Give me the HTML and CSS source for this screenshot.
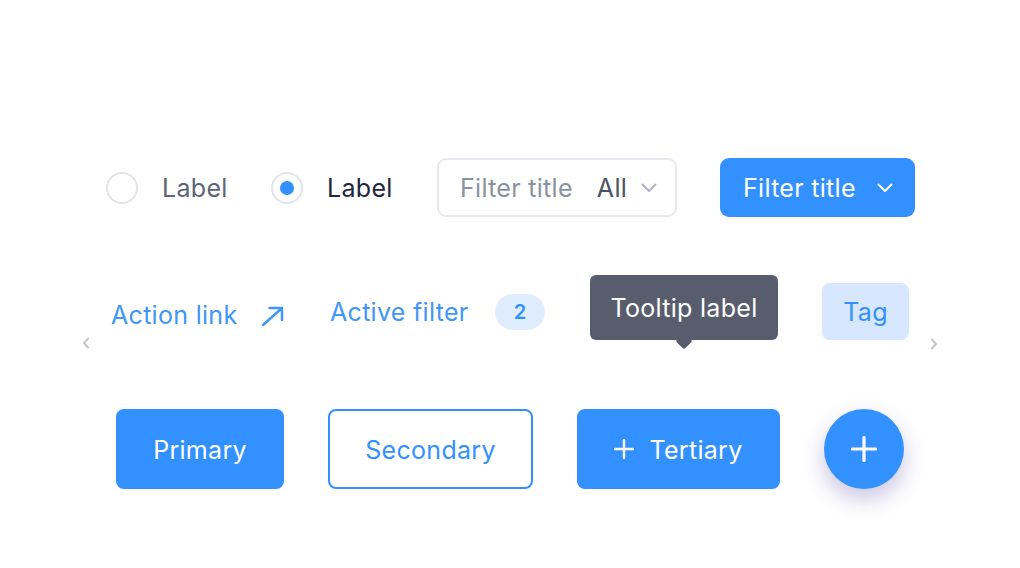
FILE: index.html
```html
<!DOCTYPE html>
<html lang="en">
<head>
<meta charset="utf-8">
<title>Components</title>
<link rel="stylesheet" href="styles.css">
</head>
<body>
<main class="board">
  <section class="row row-controls">
    <label class="radio">
      <span class="radio-ring"></span>
      <span class="radio-label">Label</span>
    </label>
    <label class="radio radio-checked">
      <span class="radio-ring"><span class="radio-dot"></span></span>
      <span class="radio-label">Label</span>
    </label>
    <button class="filter filter-outline">
      <span class="filter-title">Filter title</span>
      <span class="filter-value">All</span>
      <svg class="chev" width="16" height="10" viewBox="0 0 16 10"><path d="M1.5 1.5 L8 8 L14.5 1.5" fill="none" stroke="currentColor" stroke-width="2" stroke-linecap="round" stroke-linejoin="round"/></svg>
    </button>
    <button class="filter filter-solid">
      <span class="filter-title">Filter title</span>
      <svg class="chev" width="16" height="10" viewBox="0 0 16 10"><path d="M1.5 1.5 L8 8 L14.5 1.5" fill="none" stroke="currentColor" stroke-width="2" stroke-linecap="round" stroke-linejoin="round"/></svg>
    </button>
  </section>

  <section class="row row-misc">
    <svg class="nav nav-prev" width="8" height="12" viewBox="0 0 8 12"><path d="M6 1.5 L2 6 L6 10.5" fill="none" stroke="currentColor" stroke-width="2" stroke-linecap="round" stroke-linejoin="round"/></svg>
    <a class="action-link" href="#">
      <span>Action link</span>
      <svg width="24" height="24" viewBox="0 0 24 24"><path d="M3 21 L22 4 M9.5 4 H22 V16" fill="none" stroke="currentColor" stroke-width="2.5" stroke-linecap="round" stroke-linejoin="round"/></svg>
    </a>
    <div class="active-filter">
      <span>Active filter</span>
      <span class="badge">2</span>
    </div>
    <div class="tooltip">Tooltip label</div>
    <span class="tag">Tag</span>
    <svg class="nav nav-next" width="8" height="12" viewBox="0 0 8 12"><path d="M2 1.5 L6 6 L2 10.5" fill="none" stroke="currentColor" stroke-width="2" stroke-linecap="round" stroke-linejoin="round"/></svg>
  </section>

  <section class="row row-buttons">
    <button class="btn btn-primary">Primary</button>
    <button class="btn btn-secondary">Secondary</button>
    <button class="btn btn-tertiary">
      <svg width="20" height="20" viewBox="0 0 20 20"><path d="M10 1 V19 M1 10 H19" fill="none" stroke="currentColor" stroke-width="2.4" stroke-linecap="round"/></svg>
      <span>Tertiary</span>
    </button>
    <button class="fab" aria-label="Add">
      <svg width="26" height="26" viewBox="0 0 26 26"><path d="M13 1.5 V24.5 M1.5 13 H24.5" fill="none" stroke="currentColor" stroke-width="3.2" stroke-linecap="round"/></svg>
    </button>
  </section>
</main>
</body>
</html>
```

FILE: styles.css
```css
* { box-sizing: border-box; }

html, body {
  margin: 0;
  padding: 0;
  background: #ffffff;
}

body {
  font-family: "Inter", "Noto Sans", "Liberation Sans", sans-serif;
  font-size: 25px;
  font-weight: 400;
  letter-spacing: 0.3px;
  line-height: 30px;
  color: #1e2640;
  width: 1020px;
  height: 568px;
  overflow: hidden;
}

button {
  font: inherit;
  letter-spacing: inherit;
  border: none;
  background: none;
  padding: 0;
  margin: 0;
  cursor: pointer;
}

.board {
  padding-top: 158px;
}

.row {
  display: flex;
}

/* Row 1 */
.row-controls {
  height: 59px;
  align-items: center;
}

.radio {
  flex: none;
  display: flex;
  align-items: center;
  gap: 24px;
}

.radio:first-child { margin-left: 106px; }
.radio-checked { margin-left: 45px; }

.radio-ring {
  flex: none;
  width: 32px;
  height: 32px;
  border-radius: 50%;
  border: 2px solid #e3e4e9;
  display: flex;
  align-items: center;
  justify-content: center;
}

.radio-dot {
  width: 14px;
  height: 14px;
  border-radius: 50%;
  background: #3291ff;
}

.radio-label {
  flex: none;
  width: 64px;
  min-width: 0;
  white-space: nowrap;
  margin-top: 1px;
  color: #5b6578;
}
.radio-checked .radio-label { color: #1e2640; }

.filter {
  flex: none;
  height: 59px;
  border-radius: 9px;
  display: flex;
  align-items: center;
}

.filter span { margin-top: 1px; }

.filter-outline {
  margin-left: 46px;
  width: 240px;
  border: 2px solid #e8e8ef;
  padding-left: 21px;
  color: #8a92a1;
}

.filter-outline .filter-value {
  color: #4b5263;
  margin-left: 24px;
}

.filter-outline .chev {
  color: #b2afca;
  margin-left: 14px;
}

.filter-solid {
  margin-left: 43px;
  width: 195px;
  background: #3291ff;
  color: #ffffff;
  padding-left: 23px;
}

.filter-solid .chev { margin-left: 21px; }

/* Row 2 */
.row-misc {
  margin-top: 58px;
  height: 74px;
  align-items: flex-start;
}

.nav {
  color: #c6c6c9;
  flex: none;
}

.nav-prev {
  margin-left: 82px;
  margin-top: 62px;
}

.action-link {
  flex: none;
  margin-left: 21px;
  margin-top: 25px;
  width: 173px;
  display: flex;
  align-items: center;
  justify-content: space-between;
  color: #3f97f7;
  text-decoration: none;
}

.action-link svg { margin-top: 1px; }

.active-filter {
  flex: none;
  margin-left: 46px;
  margin-top: 19px;
  width: 215px;
  display: flex;
  align-items: center;
  justify-content: space-between;
  color: #3f97f7;
}

.badge {
  width: 50px;
  height: 36px;
  border-radius: 18px;
  background: #dfedff;
  color: #3291ff;
  font-size: 20px;
  font-weight: 600;
  letter-spacing: 0;
  display: flex;
  align-items: center;
  justify-content: center;
}

.tooltip {
  flex: none;
  position: relative;
  margin-left: 45px;
  width: 188px;
  height: 65px;
  border-radius: 6px;
  background: #585d6d;
  color: #ffffff;
  display: flex;
  align-items: center;
  justify-content: center;
}

.tooltip::after {
  content: "";
  position: absolute;
  left: 50%;
  bottom: -7px;
  width: 12px;
  height: 12px;
  margin-left: -6px;
  background: #585d6d;
  border-radius: 2px;
  transform: rotate(45deg);
}

.tag {
  flex: none;
  margin-left: 44px;
  margin-top: 8px;
  width: 87px;
  height: 57px;
  border-radius: 8px;
  background: #d6e7ff;
  color: #3291ff;
  display: flex;
  align-items: center;
  justify-content: center;
}

.nav-next {
  margin-left: 21px;
  margin-top: 63px;
}

/* Row 3 */
.row-buttons {
  margin-top: 60px;
  height: 80px;
  align-items: center;
}

.btn {
  flex: none;
  height: 80px;
  border-radius: 8px;
  display: flex;
  align-items: center;
  justify-content: center;
}

.btn span, .btn-primary, .btn-secondary { padding-top: 2px; }

.btn-primary {
  margin-left: 116px;
  width: 168px;
  background: #3291ff;
  color: #ffffff;
}

.btn-secondary {
  margin-left: 44px;
  width: 205px;
  border: 2px solid #3291ff;
  background: #ffffff;
  color: #3291ff;
}

.btn-tertiary {
  margin-left: 44px;
  width: 203px;
  background: #3291ff;
  color: #ffffff;
  gap: 15px;
}

.fab {
  flex: none;
  margin-left: 44px;
  width: 80px;
  height: 80px;
  border-radius: 50%;
  background: #3291ff;
  color: #ffffff;
  display: flex;
  align-items: center;
  justify-content: center;
  box-shadow: 0 10px 22px rgba(70, 60, 160, 0.3);
}
```
